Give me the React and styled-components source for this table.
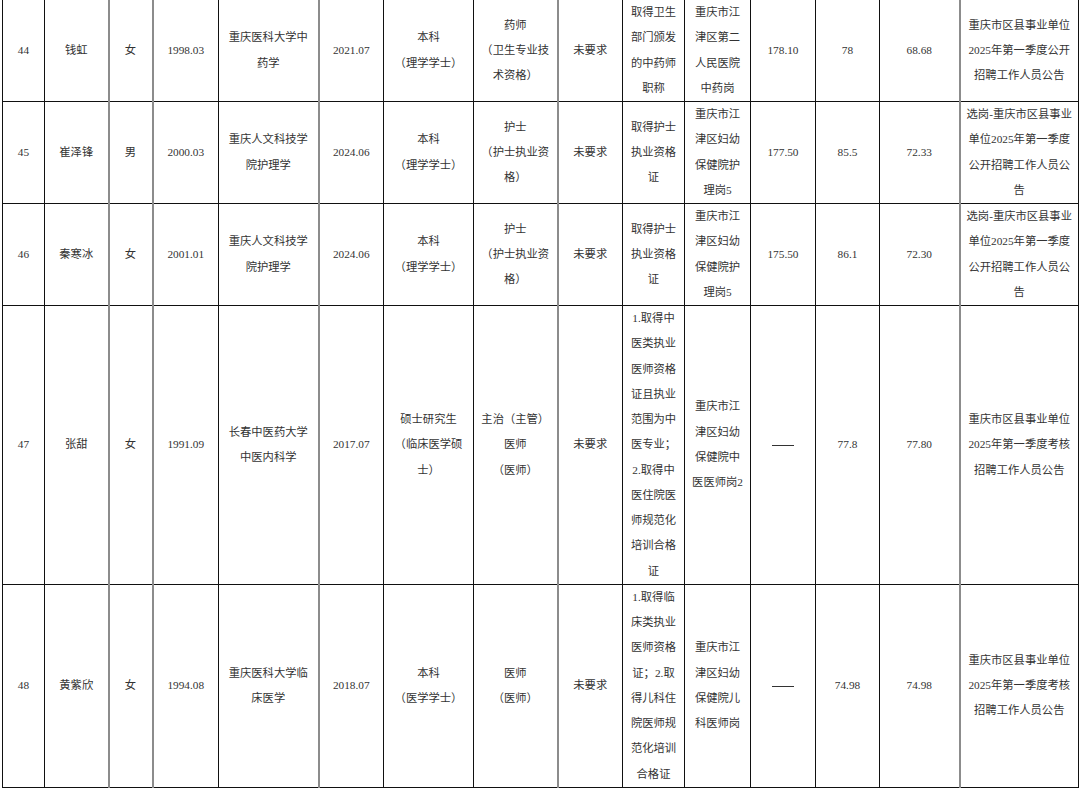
import React from "react";
import styled, { createGlobalStyle } from "styled-components";

const Global = createGlobalStyle`
  html, body { margin: 0; padding: 0; background: #ffffff; }
  body { overflow: hidden; }
`;

const Page = styled.div`
  width: 1080px;
  height: 789px;
  overflow: hidden;
  background: #fff;
`;

const Table = styled.table`
  border-collapse: collapse;
  table-layout: fixed;
  width: 1077px;
  margin: -1px 0 0 2px;
  font-family: "Liberation Serif", "Noto Sans CJK SC", serif;
  font-size: 11.3px;
  line-height: 25.25px;
  color: #333;
`;

const Cell = styled.td`
  border: 1px solid #111;
  border-right: ${(p) => (p.$gray ? "2px solid #8c8c8c" : "1px solid #111")};
  padding: 0 5px;
  text-align: center;
  vertical-align: middle;
  line-break: strict;
`;

const Line = styled.span`
  display: block;
`;

const Dash = styled.span`
  display: inline-block;
  width: 22px;
  height: 1px;
  background: #333;
  vertical-align: middle;
`;

const widths = [42, 64, 44, 66, 100, 65, 90, 84, 65, 62, 66, 65, 64, 80, 119];
const grayCols = new Set([1, 2, 4, 7, 13]);

const rows = [
  [
    "44", "钱虹", "女", "1998.03", "重庆医科大学中药学", "2021.07",
    ["本科", "（理学学士）"], ["药师", "（卫生专业技术资格）"], "未要求",
    "取得卫生部门颁发的中药师职称", "重庆市江津区第二人民医院中药岗",
    "178.10", "78", "68.68", "重庆市区县事业单位2025年第一季度公开招聘工作人员公告",
  ],
  [
    "45", "崔泽锋", "男", "2000.03", "重庆人文科技学院护理学", "2024.06",
    ["本科", "（理学学士）"], ["护士", "（护士执业资格）"], "未要求",
    "取得护士执业资格证", "重庆市江津区妇幼保健院护理岗5",
    "177.50", "85.5", "72.33", "选岗-重庆市区县事业单位2025年第一季度公开招聘工作人员公告",
  ],
  [
    "46", "秦寒冰", "女", "2001.01", "重庆人文科技学院护理学", "2024.06",
    ["本科", "（理学学士）"], ["护士", "（护士执业资格）"], "未要求",
    "取得护士执业资格证", "重庆市江津区妇幼保健院护理岗5",
    "175.50", "86.1", "72.30", "选岗-重庆市区县事业单位2025年第一季度公开招聘工作人员公告",
  ],
  [
    "47", "张甜", "女", "1991.09", "长春中医药大学中医内科学", "2017.07",
    ["硕士研究生", "（临床医学硕士）"], ["主治（主管）", "医师", "（医师）"], "未要求",
    "1.取得中医类执业医师资格证且执业范围为中医专业；2.取得中医住院医师规范化培训合格证",
    "重庆市江津区妇幼保健院中医医师岗2",
    null, "77.8", "77.80", "重庆市区县事业单位2025年第一季度考核招聘工作人员公告",
  ],
  [
    "48", "黄紫欣", "女", "1994.08", "重庆医科大学临床医学", "2018.07",
    ["本科", "（医学学士）"], ["医师", "（医师）"], "未要求",
    "1.取得临床类执业医师资格证；2.取得儿科住院医师规范化培训合格证",
    "重庆市江津区妇幼保健院儿科医师岗",
    null, "74.98", "74.98", "重庆市区县事业单位2025年第一季度考核招聘工作人员公告",
  ],
];

function renderContent(v) {
  if (v === null) return <Dash />;
  if (Array.isArray(v)) return v.map((l, i) => <Line key={i}>{l}</Line>);
  return v;
}

export default function App() {
  return (
    <Page>
      <Global />
      <Table>
        <colgroup>
          {widths.map((w, i) => (
            <col key={i} style={{ width: w }} />
          ))}
        </colgroup>
        <tbody>
          {rows.map((r) => (
            <tr key={r[0]}>
              {r.map((v, i) => (
                <Cell key={i} $gray={grayCols.has(i)}>
                  {renderContent(v)}
                </Cell>
              ))}
            </tr>
          ))}
        </tbody>
      </Table>
    </Page>
  );
}
